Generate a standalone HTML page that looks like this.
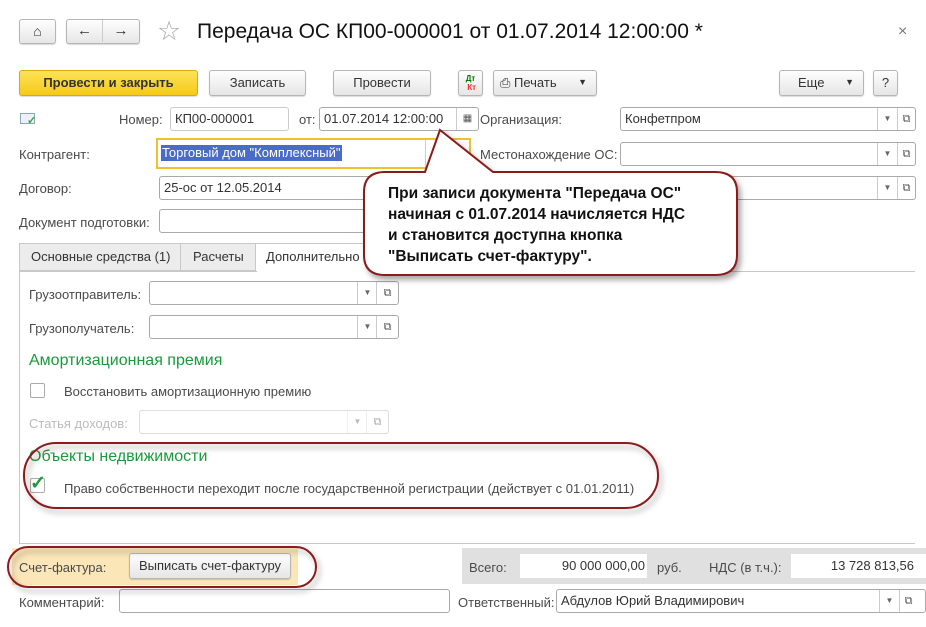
<!DOCTYPE html>
<html><head><meta charset="utf-8"><style>
*{box-sizing:border-box;margin:0;padding:0}
body{width:926px;height:627px;overflow:hidden;background:#fff;font-family:"Liberation Sans",sans-serif;font-size:13px;color:#4a4a4a;position:relative}
.a{position:absolute}
.btn{position:absolute;border:1px solid #b5b5b5;border-radius:3px;background:linear-gradient(#fefefe,#e6e6e6);text-align:center;color:#333;font-size:13px;line-height:23px;box-shadow:0 1px 1px rgba(0,0,0,.15)}
.inp{position:absolute;border:1px solid #a9a9a9;border-radius:3px;background:#fff;height:24px;line-height:22px;padding-left:4px;color:#333;font-size:13px}
.dd{position:absolute;top:0;bottom:0;border-left:1px solid #ccc;width:20px;text-align:center;font-size:8px;color:#666;line-height:22px}
.op{position:absolute;top:0;bottom:0;border-left:1px solid #ccc;width:18px;text-align:center;font-size:11px;color:#555;line-height:22px}
.lb{position:absolute;font-size:13px;color:#4a4a4a}
</style></head><body>
<div class="btn" style="left:19px;top:19px;width:37px;height:25px;font-size:14px;line-height:22px">&#8962;</div>
<div class="btn" style="left:66px;top:19px;width:74px;height:25px;font-size:15px;line-height:22px;font-weight:bold"><span style="display:inline-block;width:36px;border-right:1px solid #ccc">&#8592;</span><span style="display:inline-block;width:36px">&#8594;</span></div>
<div class="a" style="left:157px;top:16px;font-size:27px;color:#aaa">&#9734;</div>
<div class="a" style="left:197px;top:20px;font-size:21px;color:#111">Передача ОС КП00-000001 от 01.07.2014 12:00:00 *</div>
<div class="a" style="left:898px;top:23px;font-size:16px;color:#777">×</div>

<div class="btn" style="left:19px;top:70px;width:179px;height:26px;background:linear-gradient(#fde35a,#f5c916);border-color:#d7ab10;font-weight:bold;color:#333">Провести и закрыть</div>
<div class="btn" style="left:209px;top:70px;width:97px;height:26px">Записать</div>
<div class="btn" style="left:333px;top:70px;width:98px;height:26px">Провести</div>
<div class="btn" style="left:458px;top:70px;width:25px;height:26px;font-size:8px;line-height:9px;font-weight:bold;padding-top:3px"><span style="color:#070">Дт</span><br><span style="color:#e33">&nbsp;Кт</span></div>
<div class="btn" style="left:493px;top:70px;width:104px;height:26px;text-align:left;padding-left:6px">&#9113; Печать <span style="position:absolute;right:9px;font-size:9px">&#9660;</span></div>
<div class="btn" style="left:779px;top:70px;width:85px;height:26px;text-align:left;padding-left:18px">Еще <span style="position:absolute;right:9px;font-size:9px">&#9660;</span></div>
<div class="btn" style="left:873px;top:70px;width:25px;height:26px">?</div>

<div class="a" style="left:20px;top:113px;width:15px;height:11px;border:1px solid #8aa;background:#eef"></div>
<div class="a" style="left:27px;top:114px;color:#3a3;font-size:11px;font-weight:bold">✓</div>
<div class="lb" style="left:119px;top:112px">Номер:</div>
<div class="inp" style="left:170px;top:107px;width:119px;border-color:#ccc">КП00-000001</div>
<div class="lb" style="left:299px;top:112px">от:</div>
<div class="inp" style="left:319px;top:107px;width:160px">01.07.2014 12:00:00<div class="op" style="right:0;width:22px;font-size:10px">&#9638;</div></div>
<div class="lb" style="left:480px;top:112px">Организация:</div>
<div class="inp" style="left:620px;top:107px;width:296px">Конфетпром<div class="dd" style="right:18px">&#9660;</div><div class="op" style="right:0">⧉</div></div>

<div class="lb" style="left:19px;top:147px">Контрагент:</div>
<div class="a" style="left:156px;top:138px;width:315px;height:31px;border:2px solid #f0c030"></div>
<div class="a" style="left:161px;top:145px;background:#4a6cc8;color:#fff;padding:0 1px;line-height:16px">Торговый дом "Комплексный"</div>
<div class="a" style="left:425px;top:140px;height:27px;border-left:1px solid #ccc;width:20px;text-align:center;font-size:8px;line-height:27px;color:#666">&#9660;</div>
<div class="lb" style="left:480px;top:147px">Местонахождение ОС:</div>
<div class="inp" style="left:620px;top:142px;width:296px"><div class="dd" style="right:18px">&#9660;</div><div class="op" style="right:0">⧉</div></div>

<div class="lb" style="left:19px;top:181px">Договор:</div>
<div class="inp" style="left:159px;top:176px;width:300px">25-ос от 12.05.2014</div>
<div class="inp" style="left:620px;top:176px;width:296px;color:#bbb">Передача<div class="dd" style="right:18px">&#9660;</div><div class="op" style="right:0">⧉</div></div>
<div class="lb" style="left:19px;top:215px">Документ подготовки:</div>
<div class="inp" style="left:159px;top:209px;width:300px"></div>

<div class="a" style="left:19px;top:243px;width:162px;height:28px;border:1px solid #c8c8c8;background:#ececec;line-height:26px;padding-left:11px;color:#333">Основные средства (1)</div>
<div class="a" style="left:181px;top:243px;width:75px;height:28px;border:1px solid #c8c8c8;border-left:0;background:#ececec;line-height:26px;padding-left:12px;color:#333">Расчеты</div>
<div class="a" style="left:256px;top:243px;width:115px;height:29px;border:1px solid #c8c8c8;border-left:0;border-bottom:0;background:#fff;line-height:26px;padding-left:10px;color:#333">Дополнительно</div>
<div class="a" style="left:19px;top:271px;width:896px;height:273px;border:1px solid #c8c8c8;border-right:0"></div>
<div class="a" style="left:257px;top:271px;width:113px;height:2px;background:#fff"></div>

<div class="lb" style="left:29px;top:287px">Грузоотправитель:</div>
<div class="inp" style="left:149px;top:281px;width:250px"><div class="dd" style="right:21px">&#9660;</div><div class="op" style="right:0;width:22px">⧉</div></div>
<div class="lb" style="left:29px;top:321px">Грузополучатель:</div>
<div class="inp" style="left:149px;top:315px;width:250px"><div class="dd" style="right:21px">&#9660;</div><div class="op" style="right:0;width:22px">⧉</div></div>
<div class="a" style="left:29px;top:352px;font-size:16px;color:#1a9a3a">Амортизационная премия</div>
<div class="a" style="left:30px;top:383px;width:15px;height:15px;border:1px solid #aaa;border-radius:2px"></div>
<div class="lb" style="left:64px;top:384px">Восстановить амортизационную премию</div>
<div class="lb" style="left:29px;top:416px;color:#bbb">Статья доходов:</div>
<div class="inp" style="left:139px;top:410px;width:250px;border-color:#ddd"><div class="dd" style="right:21px;border-color:#eee;color:#bbb">&#9660;</div><div class="op" style="right:0;width:22px;border-color:#eee;color:#aaa">⧉</div></div>

<div class="a" style="left:29px;top:448px;font-size:16px;color:#1a9a3a">Объекты недвижимости</div>
<div class="a" style="left:30px;top:478px;width:15px;height:15px;border:1px solid #aaa;border-radius:2px"></div>
<div class="a" style="left:30px;top:472px;font-size:19px;color:#1a9a3a;font-weight:bold">✓</div>
<div class="lb" style="left:64px;top:481px">Право собственности переходит после государственной регистрации (действует с 01.01.2011)</div>

<div class="a" style="left:12px;top:548px;width:286px;height:37px;background:#fbe6b8"></div>
<div class="lb" style="left:19px;top:560px">Счет-фактура:</div>
<div class="btn" style="left:129px;top:553px;width:162px;height:26px">Выписать счет-фактуру</div>
<div class="a" style="left:462px;top:548px;width:464px;height:36px;background:#e0e0e0"></div>
<div class="lb" style="left:469px;top:560px">Всего:</div>
<div class="a" style="left:520px;top:554px;width:127px;height:24px;background:#fff;text-align:right;padding-right:2px;line-height:24px;color:#333">90 000 000,00</div>
<div class="lb" style="left:657px;top:560px">руб.</div>
<div class="lb" style="left:709px;top:560px">НДС (в т.ч.):</div>
<div class="a" style="left:791px;top:554px;width:135px;height:24px;background:#fff;text-align:right;padding-right:12px;line-height:24px;color:#333">13 728 813,56</div>

<div class="lb" style="left:19px;top:595px">Комментарий:</div>
<div class="inp" style="left:119px;top:589px;width:331px"></div>
<div class="lb" style="left:458px;top:595px">Ответственный:</div>
<div class="inp" style="left:556px;top:589px;width:370px">Абдулов Юрий Владимирович<div class="dd" style="right:26px">&#9660;</div><div class="op" style="right:8px">⧉</div></div>

<svg class="a" style="left:0;top:0" width="926" height="627">
<defs><filter id="s" x="-10%" y="-10%" width="130%" height="140%"><feDropShadow dx="3" dy="4" stdDeviation="3" flood-opacity="0.35"/></filter></defs>
<path d="M440,130 L425,172 L385,172 Q364,172 364,192 L364,255 Q364,275 385,275 L715,275 Q737,275 737,255 L737,192 Q737,172 715,172 L493,172 Z" fill="#fff" stroke="#8b1a1a" stroke-width="2" filter="url(#s)"/>
<rect x="24" y="443" width="634" height="65" rx="32" fill="none" stroke="#8b1a1a" stroke-width="2" filter="url(#s)"/>
<rect x="8" y="547" width="308" height="40" rx="20" fill="none" stroke="#8b1a1a" stroke-width="2" filter="url(#s)"/>
</svg>
<div class="a" style="left:388px;top:183px;font-weight:bold;font-size:15.5px;color:#111;line-height:21px">При записи документа "Передача ОС"<br>начиная с 01.07.2014 начисляется НДС<br>и становится доступна кнопка<br>"Выписать счет-фактуру".</div>
</body></html>
